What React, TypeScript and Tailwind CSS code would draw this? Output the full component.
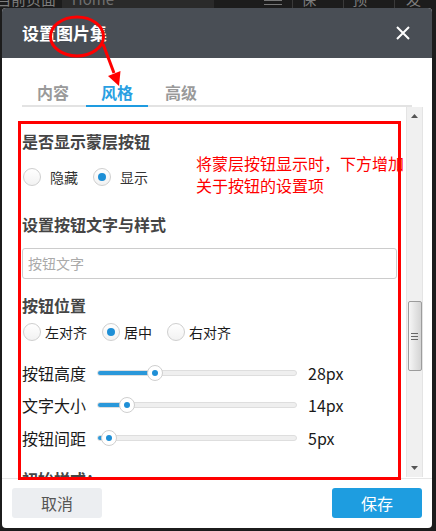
import React from 'react';

const font = "font-['Noto_Sans_CJK_SC','Liberation_Sans',sans-serif]";

const Radio = ({ checked = false }: { checked?: boolean }) => (
  <span className="flex h-[18px] w-[18px] shrink-0 items-center justify-center rounded-full border border-[#cfcfcf] bg-linear-to-b from-white to-[#f2f2f2]">
    {checked && <span className="h-[8px] w-[8px] rounded-full bg-[#1e8fd6]" />}
  </span>
);

const Slider = ({ label, pos, value }: { label: string; pos: number; value: string }) => (
  <div className="flex h-[24px] items-center">
    <span className="w-[64px] text-[16px] leading-[24px] text-[#1a1a1a]">{label}</span>
    <div className="relative ml-[11px] h-[6px] w-[200px] rounded-full border border-[#dedede] bg-[#efefef]">
      <div className="h-full rounded-full bg-[#2a98da]" style={{ width: pos }} />
      <span
        className="absolute top-1/2 flex h-[16px] w-[16px] -translate-x-1/2 -translate-y-1/2 items-center justify-center rounded-full border border-[#cfcfcf] bg-white"
        style={{ left: pos }}
      >
        <span className="h-[6px] w-[6px] rounded-full bg-[#1e8fd6]" />
      </span>
    </div>
    <span className="ml-[11px] text-[16px] leading-[24px] text-[#1a1a1a]">{value}</span>
  </div>
);

const SectionTitle = ({ children }: { children: React.ReactNode }) => (
  <div className="text-[16px] font-bold leading-[24px] text-[#454545]">{children}</div>
);

export default function App() {
  return (
    <div className={`relative h-[531px] w-[436px] overflow-hidden bg-[#1c1c1c] ${font}`}>
      {/* editor toolbar behind the dialog, only its lower edge shows */}
      <div className="flex h-[8px] overflow-hidden text-[15px] leading-[16px] text-[#7d7d7d]">
        <div className="-mt-[9px] flex items-start">
          <span className="-ml-[4px] w-[66px]">当前页面</span>
          <span className="flex h-[17px] w-[153px] bg-[#2a2a2a] pl-[10px] text-[#6f6f6f]">Home</span>
          <span className="ml-[50px] mt-[9px] flex h-[5px] w-[18px] flex-col justify-between">
            <span className="h-px w-full bg-[#777]" />
            <span className="h-px w-full bg-[#777]" />
          </span>
          <span className="ml-[10px] h-[17px] w-px bg-[#3a3a3a]" />
          <span className="ml-[8px]">保存</span>
          <span className="ml-[12px] h-[17px] w-px bg-[#3a3a3a]" />
          <span className="ml-[8px]">预览</span>
          <span className="ml-[12px] h-[17px] w-px bg-[#3a3a3a]" />
          <span className="ml-[11px]">发布</span>
        </div>
      </div>

      {/* dialog */}
      <div className="ml-[2px] flex h-[520px] w-[430px] flex-col overflow-hidden rounded-[4px] bg-white">
        <div className="flex h-[50px] shrink-0 items-center justify-between bg-[#494e55] pl-[20px] pr-[22px]">
          <span className="text-[17px] font-bold text-white">设置图片集</span>
          <svg width="14" height="14" viewBox="0 0 14 14">
            <path d="M1 1L13 13M13 1L1 13" stroke="white" strokeWidth="2" />
          </svg>
        </div>

        <div className="mx-[20px] mt-[22px] flex h-[27px] shrink-0 gap-[2px] border-b-2 border-[#e3e3e3]">
          <span className="flex w-[62px] items-start justify-center text-[16px] font-bold text-[#9a9a9a]">内容</span>
          <span className="-mb-[2px] flex w-[62px] items-start justify-center border-b-2 border-[#1e9be0] text-[16px] font-bold text-[#2a9fe2]">
            风格
          </span>
          <span className="flex w-[62px] items-start justify-center text-[16px] font-bold text-[#9a9a9a]">高级</span>
        </div>

        <div className="flex h-[371px] shrink-0">
          <div className="w-[404px] overflow-hidden pl-[20px] pr-[9px] pt-[22px]">
            <SectionTitle>是否显示蒙层按钮</SectionTitle>
            <div className="mt-[13px] flex h-[22px] items-center pl-[1px] text-[14px] text-[#333]">
              <Radio />
              <span className="ml-[9px]">隐藏</span>
              <span className="ml-[15px]">
                <Radio checked />
              </span>
              <span className="ml-[9px]">显示</span>
            </div>

            <div className="mt-[24px]">
              <SectionTitle>设置按钮文字与样式</SectionTitle>
            </div>
            <div className="mt-[12px] flex h-[31px] items-center rounded-[3px] border border-[#cccccc] px-[5px] text-[14px] text-[#aaaaaa]">
              按钮文字
            </div>

            <div className="mt-[14px]">
              <SectionTitle>按钮位置</SectionTitle>
            </div>
            <div className="mt-[4px] flex h-[22px] items-center pl-[1px] text-[14px] text-[#1a1a1a]">
              <Radio />
              <span className="ml-[4px]">左对齐</span>
              <span className="ml-[15px]">
                <Radio checked />
              </span>
              <span className="ml-[4px]">居中</span>
              <span className="ml-[15px]">
                <Radio />
              </span>
              <span className="ml-[4px]">右对齐</span>
            </div>

            <div className="mt-[18px]">
              <Slider label="按钮高度" pos={57} value="28px" />
            </div>
            <div className="mt-[8px]">
              <Slider label="文字大小" pos={29} value="14px" />
            </div>
            <div className="mt-[9px]">
              <Slider label="按钮间距" pos={11} value="5px" />
            </div>

            <div className="mt-[17px]">
              <SectionTitle>初始样式：</SectionTitle>
            </div>
          </div>

          {/* scrollbar */}
          <div className="flex h-[370px] w-[17px] flex-col items-center border-x border-[#e4e4e4] bg-[#f0f0f0]">
            <svg className="mt-[7px]" width="7" height="4" viewBox="0 0 7 4">
              <path d="M0 4L3.5 0L7 4Z" fill="#555" />
            </svg>
            <div className="mt-[183px] flex h-[70px] w-[14px] flex-col items-center justify-center gap-[2px] rounded-[2px] border border-[#9c9c9c] bg-linear-to-r from-[#f6f6f6] to-[#d4d4d4]">
              <span className="h-px w-[7px] bg-[#666]" />
              <span className="h-px w-[7px] bg-[#666]" />
              <span className="h-px w-[7px] bg-[#666]" />
            </div>
            <svg className="mt-[95px]" width="7" height="4" viewBox="0 0 7 4">
              <path d="M0 0L7 0L3.5 4Z" fill="#555" />
            </svg>
          </div>
        </div>

        <div className="flex h-[50px] shrink-0 items-start justify-between border-t border-[#e6e6e6] px-[10px] pt-[9px]">
          <button className="flex h-[30px] w-[90px] items-center justify-center rounded-[3px] bg-[#eceef1] text-[16px] text-[#555]">
            取消
          </button>
          <button className="flex h-[30px] w-[90px] items-center justify-center rounded-[3px] bg-[#1e9de0] text-[16px] text-white">
            保存
          </button>
        </div>
      </div>

      {/* red annotations laid over the screenshot */}
      <div className="absolute left-[196px] top-[152px] whitespace-nowrap text-[16px] leading-[22px] text-[#ff0000]">
        将蒙层按钮显示时，下方增加
        <br />
        关于按钮的设置项
      </div>
      <div className="absolute left-[18px] top-[121px] h-[359px] w-[383px] border-[3px] border-[#ff0000]" />
      <svg className="absolute left-0 top-0" width="436" height="100" viewBox="0 0 436 100">
        <ellipse cx="77" cy="36.5" rx="26.5" ry="19.5" fill="none" stroke="#ff0000" strokeWidth="3" />
        <path d="M103 44L114 73" stroke="#ff0000" strokeWidth="3" />
        <path d="M108 76L120.5 71L119 86Z" fill="#ff0000" />
      </svg>
    </div>
  );
}
